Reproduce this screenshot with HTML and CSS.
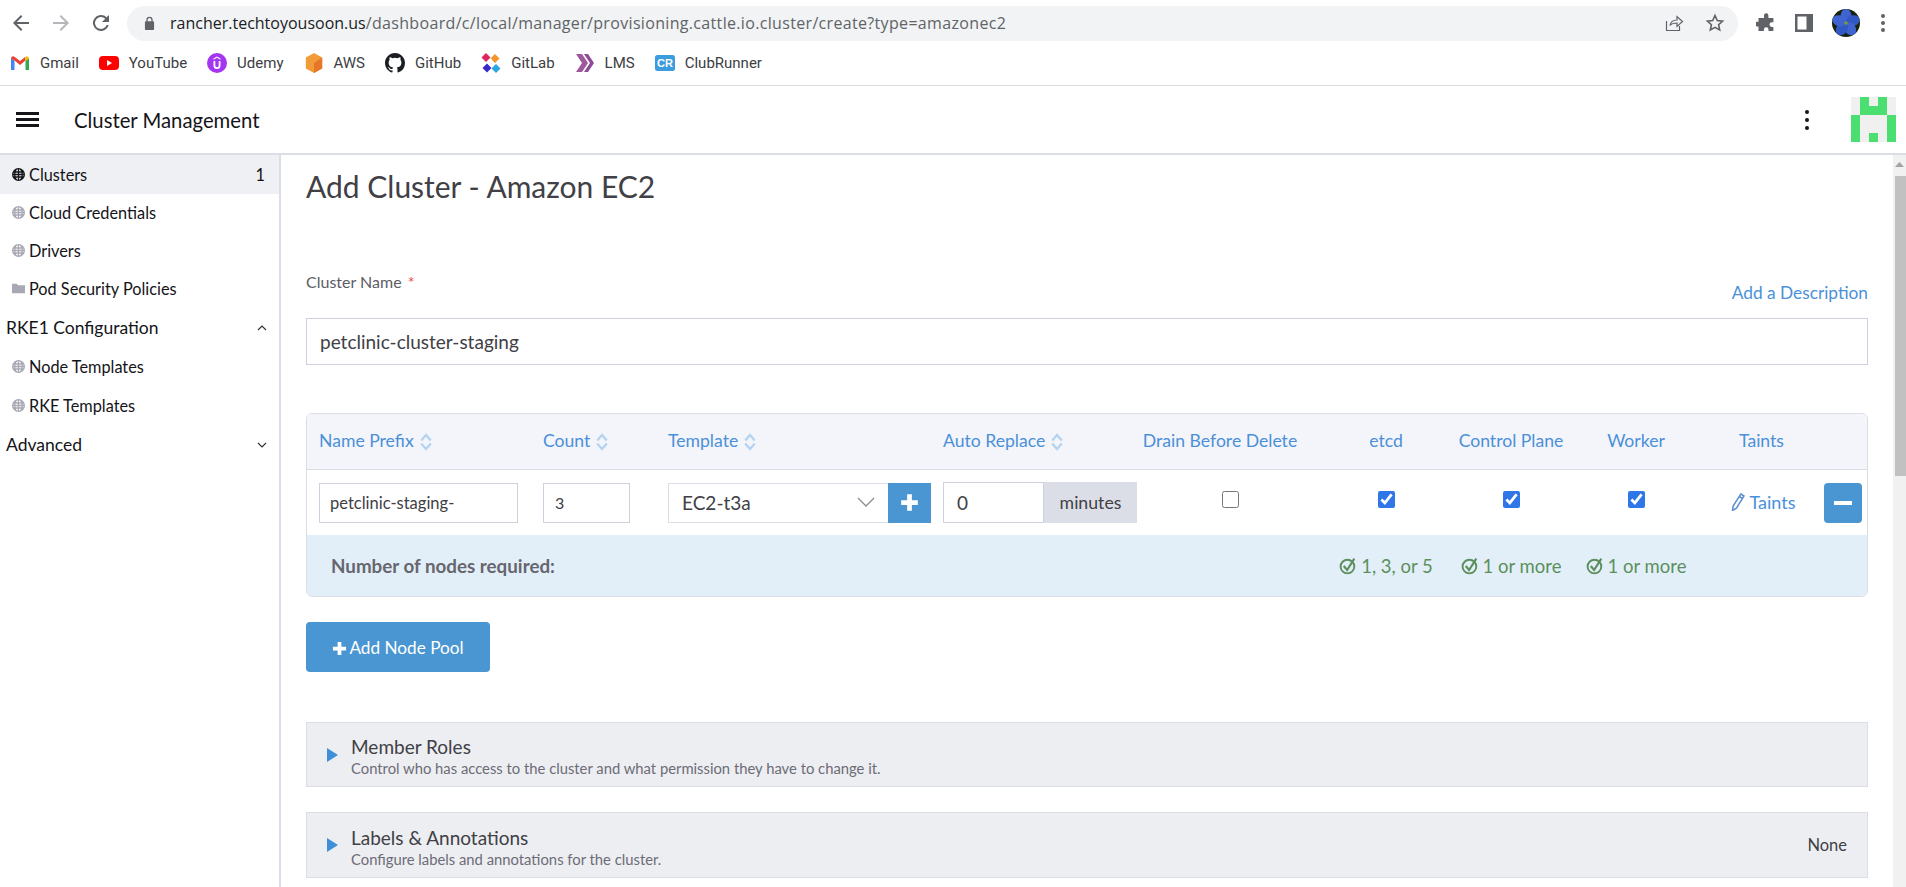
FILE: index.html
```html
<!DOCTYPE html>
<html lang="en">

<head>
  <meta charset="UTF-8">
  <title>Add Cluster - Amazon EC2</title>
  <link rel="stylesheet" href="styles.css">
</head>

<body>
  <!-- browser chrome -->
  <div class="toolbar">
    <svg class="nav-icon" viewBox="0 0 24 24"><path d="M20 11H7.8l5.6-5.6L12 4l-8 8 8 8 1.4-1.4L7.8 13H20z" fill="#5f6368"/></svg>
    <svg class="nav-icon" viewBox="0 0 24 24"><path d="M4 11h12.2l-5.6-5.6L12 4l8 8-8 8-1.4-1.4 5.6-5.6H4z" fill="#b4b6b9"/></svg>
    <svg class="nav-icon" viewBox="0 0 24 24"><path d="M17.65 6.35A8 8 0 1 0 19.73 14h-2.08a6 6 0 1 1-1.41-6.24L13 11h7V4z" fill="#5f6368"/></svg>
    <div class="omnibox">
      <svg class="lock" viewBox="0 0 12 16"><path d="M10 5.500H9.400V4a3.400 3.400 0 0 0-6.800 0v1.500H2a1 1 0 0 0-1 1V14a1 1 0 0 0 1 1h8a1 1 0 0 0 1-1V6.500a1 1 0 0 0-1-1zM4 4a2 2 0 0 1 4 0v1.500H4z" fill="#5f6368"/></svg>
      <div class="url"><span class="url-host">rancher.techtoyousoon.us</span>/dashboard/c/local/manager/provisioning.cattle.io.cluster/create?type=amazonec2</div>
      <svg class="omni-icon" viewBox="0 0 20 20"><path d="M2.500 8v9.500h13V13M6 12.500c.6-3.500 3-5.500 7-5.500V3.500l5.500 5-5.500 5V10c-3 0-5.500.6-7 2.500z" fill="none" stroke="#5f6368" stroke-width="1.200"/></svg>
      <svg class="omni-icon" viewBox="0 0 20 20"><path d="M10 2.500l2.300 5 5.300.6-4 3.600 1.100 5.300-4.700-2.700-4.700 2.700 1.100-5.300-4-3.600 5.300-.6z" fill="none" stroke="#5f6368" stroke-width="1.600"/></svg>
    </div>
    <svg class="tool-icon" viewBox="0 0 20 20"><path d="M8 2.500a2.200 2.200 0 0 1 4.400 0V5h5v4.300h-1.600a2.300 2.300 0 0 0 0 4.600h1.600V18H12.500v-1.500a2.300 2.300 0 0 0-4.600 0V18H2.500v-4.500H1a2.400 2.400 0 0 1 0-4.800h1.500V5H8z" fill="#5f6368"/></svg>
    <svg class="tool-icon" viewBox="0 0 20 20"><path d="M1 1h18v18H1zM3.500 3.500v13h9v-13z" fill="#5f6368" fill-rule="evenodd"/></svg>
    <svg class="avatar" viewBox="0 0 28 28">
      <circle cx="14" cy="14" r="14" fill="#16240f"/>
      <ellipse cx="14" cy="7" rx="5.500" ry="7" fill="#3f63d0"/>
      <ellipse cx="14" cy="7" rx="5.500" ry="7" fill="#3258c4" transform="rotate(72 14 14)"/>
      <ellipse cx="14" cy="7" rx="5.500" ry="7" fill="#3f63d0" transform="rotate(144 14 14)"/>
      <ellipse cx="14" cy="7" rx="5.500" ry="7" fill="#3258c4" transform="rotate(216 14 14)"/>
      <ellipse cx="14" cy="7" rx="5.500" ry="7" fill="#3f63d0" transform="rotate(288 14 14)"/>
      <circle cx="14" cy="14" r="1.800" fill="#7c9a3a"/>
    </svg>
    <div class="chrome-dots"><i></i><i></i><i></i></div>
  </div>

  <div class="bookmarks">
    <div class="bookmark">
      <svg viewBox="0 0 20 16"><path d="M1 15V3l3.500 2.500V15z" fill="#4285f4"/><path d="M15.500 15V5.500L19 3v12z" fill="#34a853"/><path d="M1 3.500C1 1.500 3 .5 4.500 1.700L10 6l5.500-4.300L15.500 5.500 10 10 4.500 5.500z" fill="#ea4335"/><path d="M15.500 1.700C17 .5 19 1.500 19 3.500L15.500 6z" fill="#fbbc04"/></svg>
      Gmail
    </div>
    <div class="bookmark">
      <svg viewBox="0 0 20 16"><rect x="0" y="1" width="20" height="14" rx="4" fill="#f00"/><path d="M8 5l5 3-5 3z" fill="#fff"/></svg>
      YouTube
    </div>
    <div class="bookmark">
      <svg viewBox="0 0 20 20"><circle cx="10" cy="10" r="10" fill="#a435f0"/><path d="M6.500 8v4.500a3.500 3.500 0 0 0 7 0V8h-1.800v4.500a1.700 1.700 0 0 1-3.400 0V8zM10 3.500L6.500 5.500v1.200L10 4.800l3.500 1.900V5.500z" fill="#fff"/></svg>
      Udemy
    </div>
    <div class="bookmark">
      <svg viewBox="0 0 20 22"><path d="M10 0l9 5v12l-9 5-9-5V5z" fill="#f29c38"/><path d="M10 11l9-6v12l-9 5z" fill="#e5762a"/></svg>
      AWS
    </div>
    <div class="bookmark">
      <svg viewBox="0 0 16 16"><path d="M8 0C3.580 0 0 3.580 0 8c0 3.540 2.290 6.530 5.470 7.590.4.070.55-.17.55-.38v-1.340c-2.230.48-2.700-1.070-2.700-1.070-.36-.93-.89-1.170-.89-1.170-.73-.5.050-.49.050-.49.800.060 1.230.82 1.230.82.720 1.220 1.870.87 2.330.66.070-.52.280-.87.510-1.070-1.780-.2-3.640-.89-3.640-3.950 0-.87.310-1.590.82-2.150-.08-.2-.36-1.020.080-2.120 0 0 .67-.21 2.200.82a7.600 7.600 0 0 1 4 0c1.530-1.040 2.200-.82 2.200-.82.44 1.100.16 1.920.08 2.120.51.560.82 1.270.82 2.150 0 3.070-1.870 3.750-3.650 3.950.29.250.54.730.54 1.480v2.190c0 .21.150.460.550.380A8 8 0 0 0 16 8c0-4.420-3.580-8-8-8z" fill="#1b1f23"/></svg>
      GitHub
    </div>
    <div class="bookmark">
      <svg viewBox="0 0 20 20"><path d="M5 0l4.500 4.500L5 9 .5 4.500z" fill="#e0245e"/><path d="M14 1l4.500 4.500L14 10 9.500 5.500z" fill="#f2962c"/><path d="M6 10.500l4.500 4.500L6 19.500 1.500 15z" fill="#3b28cc"/><path d="M15 11l4.500 4.500L15 20l-4.500-4.500z" fill="#2aa7e0"/><path d="M9 6h2v8H9z" fill="#fff"/></svg>
      GitLab
    </div>
    <div class="bookmark">
      <svg viewBox="0 0 20 20"><path d="M1 1h6l6 9-6 9H1l6-9z" fill="#a0589c"/><path d="M9 1h4l6 9-6 9H9l6-9z" fill="#8e4a96"/></svg>
      LMS
    </div>
    <div class="bookmark">
      <svg viewBox="0 0 20 16"><rect width="20" height="16" rx="2.500" fill="#3b9ddd"/><text x="10" y="12" class="cr-text">CR</text></svg>
      ClubRunner
    </div>
  </div>

  <!-- app header -->
  <header class="app-header">
    <div class="burger"><i></i><i></i><i></i></div>
    <div class="app-title">Cluster Management</div>
    <div class="kebab"><i></i><i></i><i></i></div>
    <div class="logo">
      <i></i><b></b><i></i><b></b><i></i>
      <i></i><b></b><b></b><b></b><i></i>
      <b></b><i></i><i></i><i></i><b></b>
      <b></b><i></i><i></i><i></i><b></b>
      <b></b><i></i><b></b><i></i><b></b>
    </div>
  </header>

  <div class="main">
    <nav class="sidebar">
      <a class="nav-item active"><svg class="globe" viewBox="0 0 14 14"><use href="#globe"/></svg><span>Clusters</span><span class="count">1</span></a>
      <a class="nav-item"><svg class="globe muted" viewBox="0 0 14 14"><use href="#globe"/></svg><span>Cloud Credentials</span></a>
      <a class="nav-item"><svg class="globe muted" viewBox="0 0 14 14"><use href="#globe"/></svg><span>Drivers</span></a>
      <a class="nav-item"><svg class="globe muted" viewBox="0 0 14 14"><path d="M0 2h5l1.500 1.500H14V12H0z"/></svg><span>Pod Security Policies</span></a>
      <div class="nav-group"><span>RKE1 Configuration</span><svg viewBox="0 0 10 6"><path d="M1 5l4-4 4 4" fill="none" stroke="#333" stroke-width="1.200"/></svg></div>
      <a class="nav-item"><svg class="globe muted" viewBox="0 0 14 14"><use href="#globe"/></svg><span>Node Templates</span></a>
      <a class="nav-item"><svg class="globe muted" viewBox="0 0 14 14"><use href="#globe"/></svg><span>RKE Templates</span></a>
      <div class="nav-group"><span>Advanced</span><svg viewBox="0 0 10 6"><path d="M1 1l4 4 4-4" fill="none" stroke="#333" stroke-width="1.200"/></svg></div>
    </nav>

    <main class="content">
      <h1>Add Cluster - Amazon EC2</h1>

      <div class="name-head">
        <label>Cluster Name <span class="req">*</span></label>
        <a class="link">Add a Description</a>
      </div>
      <input class="text-input name-input" type="text" value="petclinic-cluster-staging">

      <div class="pool">
        <div class="pool-row pool-head">
          <div class="sort">Name Prefix <svg viewBox="0 0 12 18"><use href="#sort"/></svg></div>
          <div class="sort">Count <svg viewBox="0 0 12 18"><use href="#sort"/></svg></div>
          <div class="sort">Template <svg viewBox="0 0 12 18"><use href="#sort"/></svg></div>
          <div class="sort">Auto Replace <svg viewBox="0 0 12 18"><use href="#sort"/></svg></div>
          <div class="center drain-head">Drain Before Delete</div>
          <div class="center">etcd</div>
          <div class="center">Control Plane</div>
          <div class="center">Worker</div>
          <div class="center">Taints</div>
        </div>

        <div class="pool-row pool-body">
          <div><input class="text-input prefix-input" type="text" value="petclinic-staging-"></div>
          <div><input class="text-input count-input" type="text" value="3"></div>
          <div class="template-cell">
            <div class="select">EC2-t3a<svg viewBox="0 0 18 11"><path d="M1 1l8 8 8-8" fill="none" stroke="#8a8d93" stroke-width="1.300"/></svg></div>
            <button class="square-btn add-template"><svg viewBox="0 0 16 16"><path d="M6 1h4v5h5v4h-5v5H6v-5H1V6h5z" fill="#fff"/></svg></button>
          </div>
          <div class="replace-cell">
            <input class="text-input replace-input" type="text" value="0">
            <span class="addon">minutes</span>
          </div>
          <div class="center"><input class="check" type="checkbox"></div>
          <div class="center"><input class="check" type="checkbox" checked></div>
          <div class="center"><input class="check" type="checkbox" checked></div>
          <div class="center"><input class="check" type="checkbox" checked></div>
          <div class="center"><a class="taints"><svg viewBox="0 0 14 18"><path d="M9.800 1l3.200 2-7.600 12.200L1.500 17.500l.6-4.400zM8.300 3.500l3.200 2" fill="none" stroke="#5b8fd0" stroke-width="1.500"/></svg>Taints</a></div>
          <button class="square-btn remove"><i></i></button>
        </div>

        <div class="pool-row pool-foot">
          <div class="foot-label">Number of nodes required:</div>
          <div class="center ok"><svg viewBox="0 0 18 18"><use href="#okay"/></svg>1, 3, or 5</div>
          <div class="center ok"><svg viewBox="0 0 18 18"><use href="#okay"/></svg>1 or more</div>
          <div class="center ok"><svg viewBox="0 0 18 18"><use href="#okay"/></svg>1 or more</div>
        </div>
      </div>

      <button class="add-pool"><svg viewBox="0 0 16 16"><path d="M6 1h4v5h5v4h-5v5H6v-5H1V6h5z" fill="#fff"/></svg>Add Node Pool</button>

      <section class="accordion first">
        <span class="arrow"></span>
        <div class="accordion-text">
          <h2>Member Roles</h2>
          <p>Control who has access to the cluster and what permission they have to change it.</p>
        </div>
      </section>
      <section class="accordion">
        <span class="arrow"></span>
        <div class="accordion-text">
          <h2>Labels &amp; Annotations</h2>
          <p>Configure labels and annotations for the cluster.</p>
        </div>
        <span class="status">None</span>
      </section>
    </main>

    <div class="scrollbar">
      <svg viewBox="0 0 13 21"><path d="M2 12l4.500-5 4.500 5z" fill="#a3a3a3"/></svg>
      <div class="thumb"></div>
    </div>
  </div>

  <svg class="defs" width="0" height="0">
    <symbol id="globe" viewBox="0 0 14 14">
      <path fill-rule="evenodd" d="M7 0a7 7 0 1 0 0 14A7 7 0 0 0 7 0zM6.300 1.400v2.200H4.200c.4-1 1.200-1.900 2.100-2.200zm1.400 0c.9.300 1.700 1.200 2.100 2.200H7.700zM3.900 5h2.400v1.300H3.700c0-.4.100-.9.200-1.300zm3.800 0h2.400c.1.400.2.900.2 1.300H7.700zM3.700 7.700h2.600V9H3.900c-.1-.4-.2-.9-.2-1.300zm4 0h2.600c0 .4-.1.900-.2 1.300H7.700zM4.200 10.400h2.100v2.200c-.9-.3-1.700-1.200-2.100-2.200zm3.500 0h2.100c-.4 1-1.200 1.900-2.100 2.200zM1.500 6.300c.1-.5.300-.9.500-1.300h.5c-.1.400-.2.900-.2 1.300zm0 1.400h.8c0 .4.100.9.200 1.300H2c-.2-.4-.4-.8-.5-1.300zm10.200 0h.8c-.1.500-.3.900-.5 1.300h-.5c.1-.4.200-.9.200-1.300zm0-1.400c0-.4-.1-.9-.2-1.300h.5c.2.400.4.800.5 1.300z"/>
    </symbol>
    <symbol id="sort" viewBox="0 0 12 18">
      <path d="M1.200 7.500l4.800-5.500 4.800 5.500" fill="none" stroke="#b3d3f0" stroke-width="2.300"/>
      <path d="M1.200 10.500l4.800 5.500 4.800-5.500" fill="none" stroke="#b3d3f0" stroke-width="2.300"/>
    </symbol>
    <symbol id="okay" viewBox="0 0 18 18">
      <circle cx="8" cy="10" r="6.500" fill="none" stroke="#5c8f5c" stroke-width="1.800"/>
      <path d="M4.500 9.500l3.200 3.800L14.500 2.500" fill="none" stroke="#5c8f5c" stroke-width="2"/>
    </symbol>
  </svg>
</body>

</html>
```

FILE: styles.css
```css
* {
  box-sizing: border-box;
}

html,
body {
  margin: 0;
  height: 100%;
  overflow: hidden;
}

body {
  font-family: Lato, sans-serif;
  color: #141419;
  background-color: #fff;
}

.defs {
  position: absolute;
}

/* browser chrome */
.toolbar {
  display: flex;
  align-items: center;
  height: 45px;
  padding-top: 1px;
  padding-left: 9px;
}

.nav-icon {
  width: 24px;
  height: 24px;
  margin-right: 16px;
}

.omnibox {
  display: flex;
  align-items: center;
  width: 1611px;
  height: 35px;
  margin-left: -2px;
  padding: 0 13px 0 17px;
  border-radius: 18px;
  background-color: #f1f3f4;
}

.lock {
  width: 11px;
  height: 15px;
  margin-right: 15px;
}

.url {
  flex: 1;
  font-family: "Open Sans", sans-serif;
  font-size: 16px;
  letter-spacing: 0.33px;
  color: #5f6368;
}

.url-host {
  letter-spacing: 0;
  color: #202124;
}

.omni-icon {
  width: 20px;
  height: 20px;
  margin-left: 21px;
}

.tool-icon {
  width: 20px;
  height: 20px;
  margin-left: 18px;
}

.avatar {
  width: 28px;
  height: 28px;
  margin-left: 18px;
}

.chrome-dots {
  display: flex;
  flex-direction: column;
  gap: 3px;
  margin-left: 21px;
}

.chrome-dots i {
  width: 4px;
  height: 4px;
  border-radius: 50%;
  background-color: #5f6368;
}

.bookmarks {
  display: flex;
  align-items: center;
  height: 41px;
  padding-left: 10px;
  padding-bottom: 4px;
  border-bottom: 1px solid #dadce0;
  font-family: "Roboto", sans-serif;
  font-size: 15px;
  color: #3c4043;
}

.bookmark {
  display: flex;
  align-items: center;
  gap: 10px;
  margin-right: 20px;
}

.bookmark svg {
  width: 20px;
  height: 20px;
}

.cr-text {
  font-family: "Liberation Sans", sans-serif;
  font-size: 11px;
  font-weight: bold;
  fill: #fff;
  text-anchor: middle;
}

/* app header */
.app-header {
  display: flex;
  align-items: center;
  height: 69px;
  border-bottom: 2px solid #dcdee7;
}

.burger {
  display: flex;
  flex-direction: column;
  gap: 3px;
  margin-left: 16px;
}

.burger i {
  width: 23px;
  height: 3px;
  background-color: #141419;
}

.app-title {
  margin-left: 35px;
  font-size: 20.3px;
  color: #141419;
}

.kebab {
  display: flex;
  flex-direction: column;
  gap: 4px;
  margin-left: auto;
  margin-right: 42px;
}

.kebab i {
  width: 4px;
  height: 4px;
  border-radius: 50%;
  background-color: #141419;
}

.logo {
  display: grid;
  grid-template-columns: repeat(5, 9px);
  grid-auto-rows: 9px;
  margin-right: 10px;
}

.logo i {
  background-color: #f0f0f0;
}

.logo b {
  background-color: #4bde70;
}

/* sidebar */
.main {
  display: flex;
  height: 732px;
}

.sidebar {
  flex: none;
  width: 281px;
  border-right: 2px solid #dcdee7;
}

.nav-item {
  display: flex;
  align-items: center;
  height: 38px;
  padding: 0 14px 2px 12px;
  font-size: 16.3px;
  color: #141419;
}

.nav-item.active {
  height: 39px;
  padding-bottom: 0;
  background-color: #eff0f4;
}

.nav-group + .nav-item {
  height: 39px;
}

.globe {
  flex: none;
  width: 13px;
  height: 13px;
  margin-right: 4px;
  fill: #141419;
}

.globe.muted {
  fill: #a9a9b5;
}

.count {
  margin-left: auto;
}

.nav-group {
  display: flex;
  align-items: center;
  justify-content: space-between;
  height: 40px;
  padding: 0 12px 1px 6px;
  font-size: 17.5px;
}

.nav-group svg {
  width: 10px;
  height: 6px;
}

/* content */
.content {
  flex: none;
  width: 1612px;
  padding: 0 25px;
}

h1 {
  margin: 11px 0 0;
  font-size: 30px;
  font-weight: 400;
  line-height: 40px;
  color: #404046;
}

.name-head {
  display: flex;
  justify-content: space-between;
  align-items: flex-end;
  height: 50px;
  margin-top: 58px;
  padding-bottom: 11px;
}

label {
  align-self: flex-start;
  margin-top: 8px;
  font-size: 16px;
  color: #5c5c66;
}

.req {
  margin-left: 2px;
  color: #f64747;
}

.link {
  font-size: 17.3px;
  color: #4a90d9;
}

.text-input {
  font-family: Lato, sans-serif;
  border: 1px solid #cfd1de;
  border-radius: 0;
  background-color: #fff;
  color: #404046;
  outline: none;
}

.name-input {
  display: block;
  width: 100%;
  height: 47px;
  margin-top: 4px;
  padding: 0 13px;
  font-size: 19px;
}

/* node pool table */
.pool {
  margin-top: 48px;
  border: 1px solid #dcdee7;
  border-radius: 6px;
  overflow: hidden;
}

.pool-row {
  display: grid;
  grid-template-columns: 224px 125px 275px 194px 186px 126px 124px 126px 125px 38px;
  align-items: center;
  padding-left: 12px;
}

.pool-head {
  height: 56px;
  padding-bottom: 2px;
  border-bottom: 1px solid #dcdee7;
  background-color: #f4f5fa;
  font-size: 17.6px;
  color: #4a90d9;
}

.pool-body {
  height: 65px;
}

.pool-foot {
  height: 61px;
  background-color: #e2eff9;
  font-size: 18.5px;
}

.sort {
  display: flex;
  align-items: center;
  gap: 6px;
}

.sort svg {
  width: 12px;
  height: 18px;
  margin-top: 2px;
}

.center {
  text-align: center;
}

.drain-head {
  padding-right: 20px;
}

.prefix-input {
  width: 199px;
  height: 40px;
  padding: 0 10px;
  font-size: 16.5px;
}

.count-input {
  width: 87px;
  height: 40px;
  padding: 0 11px;
  font-size: 16px;
}

.template-cell {
  display: flex;
}

.select {
  display: flex;
  align-items: center;
  justify-content: space-between;
  width: 220px;
  height: 40px;
  padding: 0 13px;
  border: 1px solid #dcdee7;
  border-right: none;
  font-size: 19px;
  color: #404046;
}

.select svg {
  width: 18px;
  height: 11px;
}

.square-btn {
  display: flex;
  align-items: center;
  justify-content: center;
  width: 43px;
  height: 40px;
  padding: 0;
  border: none;
  background-color: #4a96d2;
}

.add-template svg {
  width: 19px;
  height: 19px;
}

.replace-cell {
  display: flex;
  height: 41px;
}

.replace-input {
  width: 101px;
  padding: 0 13px;
  font-size: 19px;
}

.addon {
  display: flex;
  align-items: center;
  justify-content: center;
  width: 93px;
  background-color: #dcdee7;
  font-size: 17.7px;
  color: #404046;
}

.check {
  display: block;
  width: 17px;
  height: 17px;
  margin: -7px auto 0;
  accent-color: #2f77e8;
}

.taints {
  display: inline-flex;
  align-items: center;
  gap: 4px;
  margin-left: 4px;
  font-size: 18px;
  color: #4a90d9;
}

.taints svg {
  width: 14px;
  height: 18px;
}

.remove {
  width: 38px;
  border-radius: 4px;
}

.remove i {
  width: 18px;
  height: 4px;
  background-color: #fff;
}

.foot-label {
  grid-column: 1 / 6;
  margin-left: 12px;
  font-size: 18.8px;
  font-weight: 700;
  color: #66666e;
}

.ok {
  display: flex;
  align-items: center;
  justify-content: center;
  gap: 3px;
  color: #5c8f5c;
  white-space: nowrap;
}

.ok svg {
  width: 19px;
  height: 19px;
}

.add-pool {
  display: flex;
  align-items: center;
  justify-content: center;
  width: 184px;
  height: 50px;
  margin-top: 25px;
  padding: 0;
  border: none;
  border-radius: 4px;
  background-color: #4a96d2;
  font-family: Lato, sans-serif;
  font-size: 17.2px;
  color: #fff;
}

.add-pool svg {
  width: 15px;
  height: 15px;
  margin-top: 3px;
  margin-right: 2px;
}

/* collapsed sections */
.accordion {
  display: flex;
  align-items: center;
  height: 66px;
  margin-top: 25px;
  padding: 0 20px;
  border: 1px solid #dcdee7;
  background-color: #edeef2;
}

.accordion.first {
  height: 65px;
  margin-top: 50px;
}

.arrow {
  width: 0;
  height: 0;
  margin-right: 13px;
  border-top: 7px solid transparent;
  border-bottom: 7px solid transparent;
  border-left: 11px solid #3d8fd6;
}

.accordion-text {
  margin-top: 5px;
}

h2 {
  margin: 0;
  font-size: 19px;
  font-weight: 400;
  line-height: 22px;
  color: #404046;
}

p {
  margin: 0;
  font-size: 14.8px;
  line-height: 20px;
  color: #6c6c76;
}

.status {
  margin-left: auto;
  font-size: 16.5px;
  color: #404046;
}

/* page scrollbar */
.scrollbar {
  flex: none;
  width: 13px;
  background-color: #f1f1f1;
}

.scrollbar svg {
  display: block;
  width: 13px;
  height: 21px;
}

.thumb {
  width: 11px;
  height: 300px;
  margin-left: 2px;
  background-color: #c1c1c1;
}
```
